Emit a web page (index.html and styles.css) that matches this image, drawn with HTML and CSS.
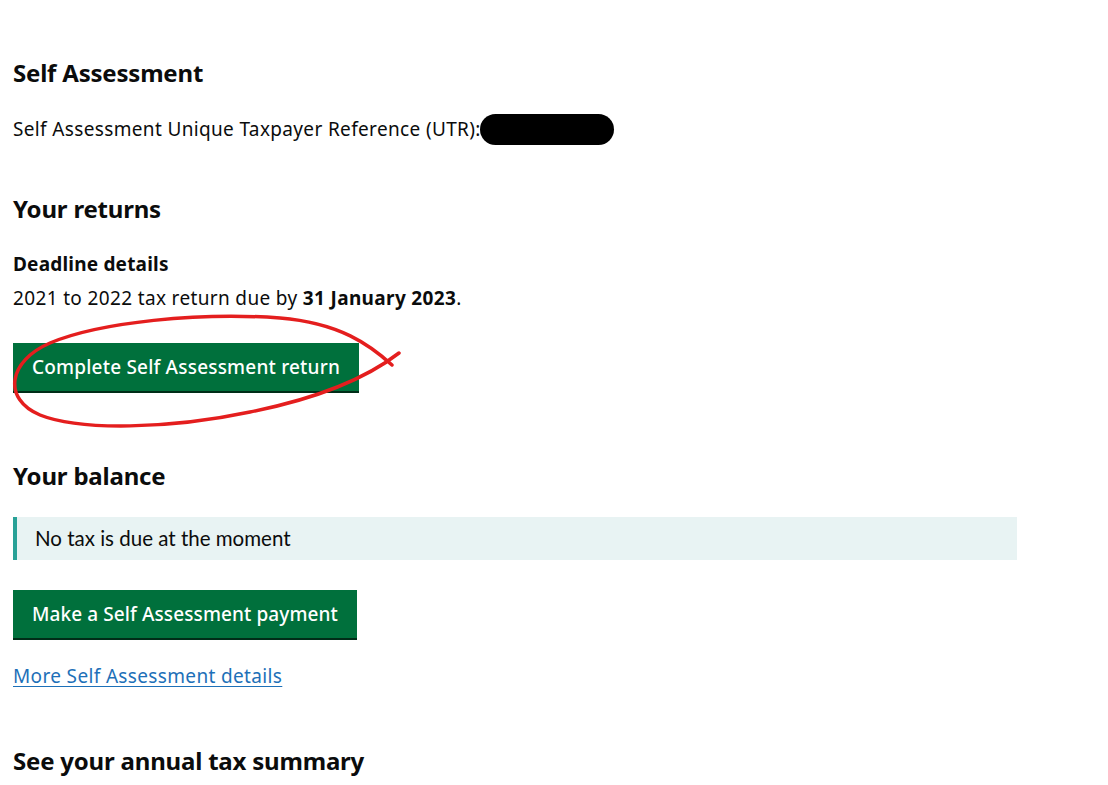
FILE: index.html
```html
<!DOCTYPE html>
<html lang="en">
<head>
<meta charset="utf-8">
<title>Self Assessment</title>
<link rel="stylesheet" href="styles.css">
</head>
<body>
<main class="page">
  <section class="section">
    <h2 class="heading">Self Assessment</h2>
    <p class="body utr">Self Assessment Unique Taxpayer Reference (UTR):<span class="redact"></span></p>
  </section>

  <section class="section returns">
    <h2 class="heading">Your returns</h2>
    <h3 class="subheading">Deadline details</h3>
    <p class="body">2021 to 2022 tax return due by <strong>31 January 2023</strong>.</p>
    <div class="btn-wrap">
      <a class="button" href="#">Complete Self Assessment return</a>
      <svg class="scribble" width="420" height="140" viewBox="0 0 420 140" aria-hidden="true">
        <path d="M392 56 C370 36, 340 14, 280 9 C200 3, 100 13, 50 34 C8 52, 2 90, 40 106 C80 122, 170 120, 250 103 C320 89, 368 68, 399 44" fill="none" stroke="#e41e1e" stroke-width="3.5" stroke-linecap="round"/>
      </svg>
    </div>
  </section>

  <section class="section balance">
    <h2 class="heading">Your balance</h2>
    <div class="inset">No tax is due at the moment</div>
    <a class="button" href="#">Make a Self Assessment payment</a>
    <p class="body"><a class="link" href="#">More Self Assessment details</a></p>
  </section>

  <section class="section summary">
    <h2 class="heading">See your annual tax summary</h2>
  </section>
</main>
</body>
</html>
```

FILE: styles.css
```css
html, body {
  margin: 0;
  padding: 0;
  background: #ffffff;
}

body {
  font-family: "Noto Sans", "Liberation Sans", Arial, sans-serif;
  color: #0b0c0c;
}

.page {
  padding: 58px 0 0 13px;
}

.section {
  margin: 0;
}

.heading {
  font-size: 24px;
  font-weight: 700;
  line-height: 30px;
  margin: 0 0 22px;
  letter-spacing: -0.2px;
}

.subheading {
  font-size: 19px;
  font-weight: 700;
  line-height: 25px;
  margin: 0 0 9px;
  padding-top: 6px;
  letter-spacing: 0.2px;
}

.body {
  font-size: 19px;
  line-height: 25px;
  margin: 0;
  letter-spacing: 0.35px;
}

.utr {
  display: flex;
  align-items: center;
  padding-top: 4px;
}

.redact {
  display: inline-block;
  width: 134px;
  height: 31px;
  background: #000;
  border-radius: 16px;
  margin-left: -1px;
}

.returns {
  margin-top: 49px;
}

.btn-wrap {
  position: relative;
  margin-top: 32px;
  width: max-content;
}

.button {
  display: inline-block;
  background: #00703c;
  color: #ffffff;
  font-size: 19px;
  line-height: 25px;
  padding: 12px 19px 11px;
  box-shadow: 0 2px 0 #002d18;
  text-decoration: none;
  font-weight: 500;
  letter-spacing: 0.2px;
}

.balance .button {
  letter-spacing: 0.1px;
}

.scribble {
  position: absolute;
  left: -13px;
  top: -34px;
  pointer-events: none;
}

.balance {
  margin-top: 70px;
}

.balance .heading {
  margin-bottom: 26px;
}

.inset {
  background: #e8f3f3;
  border-left: 4px solid #28a197;
  padding: 9px 18px;
  font-family: Lato, "Noto Sans", sans-serif;
  font-size: 20.5px;
  line-height: 25px;
  width: 964px;
  margin: 0 0 30px;
}

.balance .body {
  margin-top: 26px;
}

.link {
  color: #1d70b8;
  text-decoration: underline;
  text-underline-offset: 3px;
  text-decoration-thickness: 1px;
}

.summary {
  margin-top: 57px;
}
```
